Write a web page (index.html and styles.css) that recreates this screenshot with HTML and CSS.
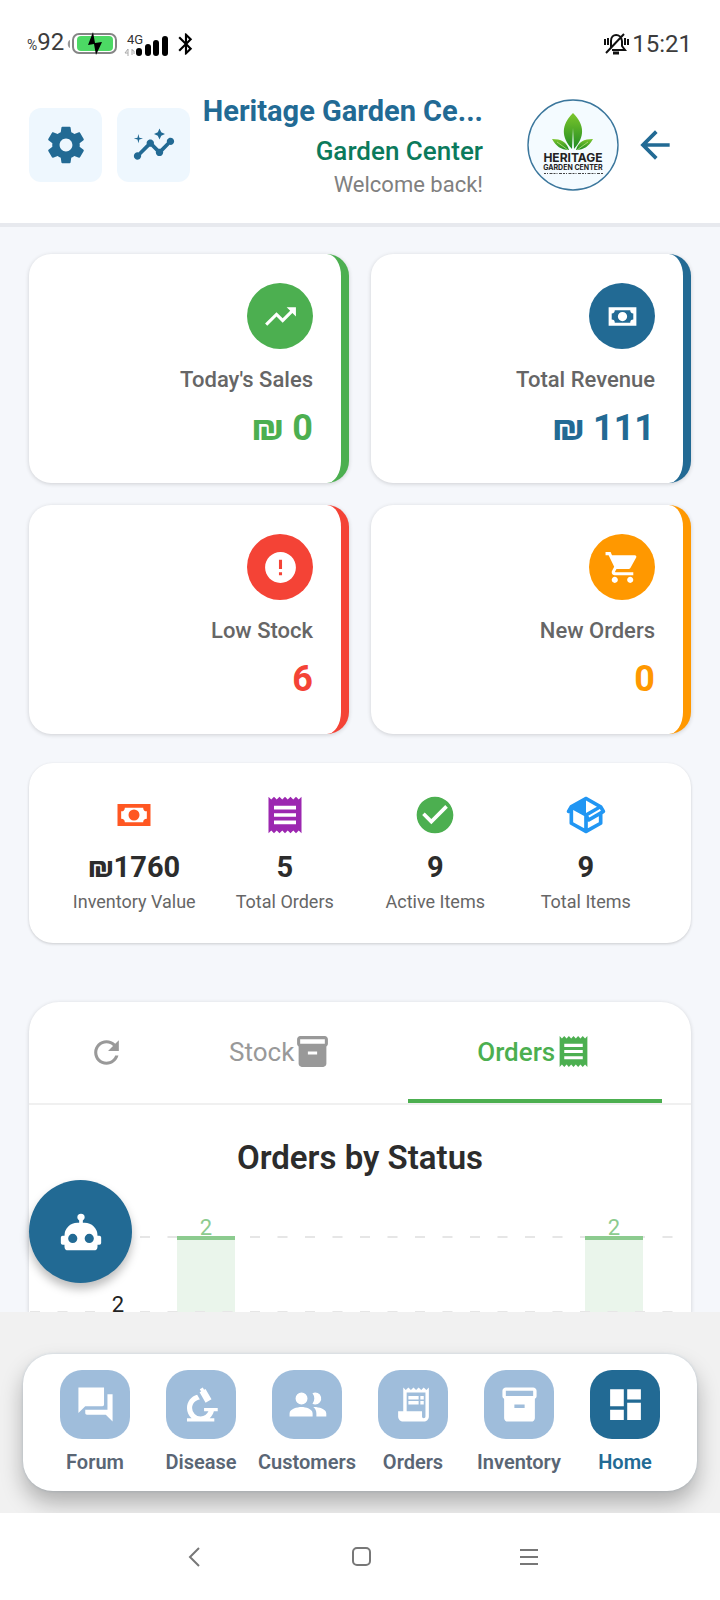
FILE: index.html
```html
<!DOCTYPE html>
<html lang="en">
<head>
<meta charset="utf-8">
<meta name="viewport" content="width=device-width, initial-scale=1">
<title>Heritage Garden Center</title>
<link rel="stylesheet" href="styles.css">
</head>
<body>
<div class="app">
  <div class="status-bar">
    <div class="status-group">
      <span class="battery-level"><span class="percent">%</span>92</span>
      <svg class="battery" width="50" height="24" viewBox="0 0 50 24" aria-hidden="true">
        <path d="M3 8v8c-3-1-3-7 0-8z" fill="#999"/>
        <rect x="6" y="2" width="43" height="19" rx="6" fill="#fff" stroke="#858585" stroke-width="2"/>
        <rect x="10" y="4" width="36" height="15" rx="4" fill="#4cd964"/>
        <path d="M26 0L21 13l6-1 2 11 6-13-7 1z" fill="#000"/>
      </svg>
      <svg class="signal" width="46" height="28" viewBox="0 -4 46 28" aria-hidden="true">
        <text x="3" y="10" class="network">4G</text>
        <path d="M4 22v-7l-3 4h3M8 15v6M8 16l2 1v3" fill="none" stroke="#aaa" stroke-width="1"/>
        <rect x="12" y="14" width="6" height="8" rx="3"/>
        <rect x="21" y="10" width="6" height="12" rx="3"/>
        <rect x="29" y="6" width="6" height="16" rx="3"/>
        <rect x="38" y="2" width="6" height="20" rx="3"/>
      </svg>
      <svg width="26" height="26" viewBox="0 0 24 24" aria-hidden="true"><path d="M17.71 7.71L12 2h-1v7.59L6.41 5 5 6.41 10.59 12 5 17.59 6.41 19 11 14.41V22h1l5.71-5.71-4.3-4.29 4.3-4.29zM13 5.83l1.88 1.88L13 9.59V5.83zm1.88 10.46L13 18.17v-3.76l1.88 1.88z"/></svg>
    </div>
    <div class="status-group">
      <svg width="26" height="24" viewBox="0 0 26 24" fill="none" stroke="#111" stroke-width="2" aria-hidden="true">
        <path d="M8 15V9c0-8 10-8 11 0v5l3 4H9M3 21L21 2M2 7v6M5 6v7M22 6v7M25 7v6"/><path d="M10 21h6" stroke-width="3"/>
      </svg>
      <span class="clock">15:21</span>
    </div>
  </div>

  <header class="header">
    <div class="header-actions">
      <button class="square-button" aria-label="Settings"><svg class="icon-lg" viewBox="0 0 24 24"><path d="M19.43 12.98c.04-.32.07-.64.07-.98s-.03-.66-.07-.98l2.11-1.65c.19-.15.24-.42.12-.64l-2-3.46c-.12-.22-.39-.3-.61-.22l-2.49 1c-.52-.4-1.08-.73-1.69-.98l-.38-2.65C14.46 2.18 14.25 2 14 2h-4c-.25 0-.46.18-.49.42l-.38 2.65c-.61.25-1.17.59-1.69.98l-2.49-1c-.23-.09-.49 0-.61.22l-2 3.46c-.13.22-.07.49.12.64l2.11 1.65c-.04.32-.07.65-.07.98s.03.66.07.98l-2.11 1.65c-.19.15-.24.42-.12.64l2 3.46c.12.22.39.3.61.22l2.49-1c.52.4 1.08.73 1.69.98l.38 2.65c.03.24.24.42.49.42h4c.25 0 .46-.18.49-.42l.38-2.65c.61-.25 1.17-.59 1.69-.98l2.49 1c.23.09.49 0 .61-.22l2-3.46c.12-.22.07-.49-.12-.64l-2.11-1.65zM12 15.5c-1.93 0-3.5-1.57-3.5-3.5s1.57-3.5 3.5-3.5 3.5 1.57 3.5 3.5-1.57 3.5-3.5 3.5z"/></svg></button>
      <button class="square-button" aria-label="Insights"><svg class="icon-lg" viewBox="0 0 24 24"><path d="M21 8c-1.45 0-2.26 1.44-1.93 2.51l-3.55 3.56c-.3-.09-.74-.09-1.04 0l-2.55-2.55C12.27 10.45 11.46 9 10 9c-1.45 0-2.27 1.44-1.93 2.52l-4.56 4.55C2.44 15.74 1 16.55 1 18c0 1.1.9 2 2 2 1.45 0 2.26-1.44 1.93-2.51l4.55-4.56c.3.09.74.09 1.04 0l2.55 2.55C12.73 16.55 13.54 18 15 18c1.45 0 2.27-1.44 1.93-2.52l3.56-3.55C21.56 12.26 23 11.45 23 10c0-1.1-.9-2-2-2z"/><path d="M15 9l.94-2.07L18 6l-2.06-.93L15 3l-.92 2.07L12 6l2.08.93zM3.5 11L4 9l2-.5L4 8l-.5-2L3 8l-2 .5L3 9z"/></svg></button>
    </div>
    <div class="header-text">
      <h1 class="store-name">Heritage Garden Ce...</h1>
      <p class="store-type">Garden Center</p>
      <p class="welcome">Welcome back!</p>
    </div>
    <svg class="logo" viewBox="0 0 92 92" role="img" aria-label="Heritage Garden Center logo">
      <defs><linearGradient id="leaf" x1="0" y1="0" x2="0" y2="1"><stop offset="0" stop-color="#7cc62c"/><stop offset="1" stop-color="#1f8b22"/></linearGradient></defs>
      <circle cx="46" cy="46" r="45" fill="#f4fbff" stroke="#3a769c" stroke-width="1.4"/>
      <path d="M46 14c12 12 12 24 1 36l-1-21-1 21C34 38 34 26 46 14z" fill="url(#leaf)"/>
      <path d="M25 40c9 0 15 3 17 11-8 0-13-4-17-11zM66 40c-9 0-15 3-17 11 8 0 13-4 17-11z" fill="url(#leaf)"/>
      <path d="M30 43l11 8M61 43l-11 8" stroke="#b9e27d" stroke-width=".8"/>
      <text x="46" y="63" class="logo-name">HERITAGE</text>
      <text x="46" y="71" class="logo-sub">GARDEN CENTER</text>
      <path d="M17 74.5h59" stroke="#444" stroke-width="1" stroke-dasharray="2 1 1 1.5 3 1"/>
    </svg>
    <button class="back-button" aria-label="Back"><svg class="icon-lg" viewBox="0 0 24 24"><path d="M20 11H7.83l5.59-5.59L12 4l-8 8 8 8 1.41-1.41L7.83 13H20v-2z"/></svg></button>
  </header>

  <div class="viewport">
    <main class="content">
      <section class="stats">
        <article class="stat green">
          <span class="stat-icon"><svg class="icon-md" viewBox="0 0 24 24"><path d="M16 6l2.29 2.29-4.88 4.88-4-4L2 16.59 3.41 18l6-6 4 4 6.3-6.29L22 12V6z"/></svg></span>
          <span class="stat-label">Today's Sales</span>
          <strong class="stat-value">₪ 0</strong>
        </article>
        <article class="stat blue">
          <span class="stat-icon"><svg class="icon-md" viewBox="0 0 24 24"><path fill-rule="evenodd" d="M3 6H21V18H3V6M12 9A3 3 0 0 1 15 12A3 3 0 0 1 12 15A3 3 0 0 1 9 12A3 3 0 0 1 12 9M7 8A2 2 0 0 1 5 10V14A2 2 0 0 1 7 16H17A2 2 0 0 1 19 14V10A2 2 0 0 1 17 8H7Z"/></svg></span>
          <span class="stat-label">Total Revenue</span>
          <strong class="stat-value">₪ 111</strong>
        </article>
        <article class="stat red">
          <span class="stat-icon"><svg class="icon-md" viewBox="0 0 24 24"><path d="M12 2C6.48 2 2 6.48 2 12s4.48 10 10 10 10-4.48 10-10S17.52 2 12 2zm1 15h-2v-2h2v2zm0-4h-2V7h2v6z"/></svg></span>
          <span class="stat-label">Low Stock</span>
          <strong class="stat-value">6</strong>
        </article>
        <article class="stat orange">
          <span class="stat-icon"><svg class="icon-md" viewBox="0 0 24 24"><path d="M7 18c-1.1 0-1.99.9-1.99 2S5.9 22 7 22s2-.9 2-2-.9-2-2-2zM1 2v2h2l3.6 7.59-1.35 2.45c-.16.28-.25.61-.25.96 0 1.1.9 2 2 2h12v-2H7.42c-.14 0-.25-.11-.25-.25l.03-.12.9-1.63h7.45c.75 0 1.41-.41 1.75-1.03l3.58-6.49A1.003 1.003 0 0 0 20 4H5.21l-.94-2H1zm16 16c-1.1 0-1.99.9-1.99 2s.89 2 1.99 2 2-.9 2-2-.9-2-2-2z"/></svg></span>
          <span class="stat-label">New Orders</span>
          <strong class="stat-value">0</strong>
        </article>
      </section>

      <section class="summary">
        <div class="summary-item">
          <svg class="icon-lg ink-coral" viewBox="0 0 24 24"><path fill-rule="evenodd" d="M3 6H21V18H3V6M12 9A3 3 0 0 1 15 12A3 3 0 0 1 12 15A3 3 0 0 1 9 12A3 3 0 0 1 12 9M7 8A2 2 0 0 1 5 10V14A2 2 0 0 1 7 16H17A2 2 0 0 1 19 14V10A2 2 0 0 1 17 8H7Z"/></svg>
          <strong class="summary-value">₪1760</strong>
          <span class="summary-label">Inventory Value</span>
        </div>
        <div class="summary-item">
          <svg class="icon-lg ink-purple" viewBox="0 0 24 24"><path d="M18 17H6v-2h12v2zm0-4H6v-2h12v2zm0-4H6V7h12v2zM3 22l1.5-1.5L6 22l1.5-1.5L9 22l1.5-1.5L12 22l1.5-1.5L15 22l1.5-1.5L18 22l1.5-1.5L21 22V2l-1.5 1.5L18 2l-1.5 1.5L15 2l-1.5 1.5L12 2l-1.5 1.5L9 2 7.5 3.5 6 2 4.5 3.5 3 2v20z"/></svg>
          <strong class="summary-value">5</strong>
          <span class="summary-label">Total Orders</span>
        </div>
        <div class="summary-item">
          <svg class="icon-lg ink-green" viewBox="0 0 24 24"><path d="M12 2C6.48 2 2 6.48 2 12s4.48 10 10 10 10-4.48 10-10S17.52 2 12 2zm-2 15l-5-5 1.41-1.41L10 14.17l7.59-7.59L19 8l-9 9z"/></svg>
          <strong class="summary-value">9</strong>
          <span class="summary-label">Active Items</span>
        </div>
        <div class="summary-item">
          <svg class="icon-lg ink-sky" viewBox="0 0 24 24"><path d="M2,10.96C1.5,10.68 1.35,10.07 1.63,9.59L3.13,7C3.24,6.8 3.41,6.66 3.6,6.58L11.43,2.18C11.59,2.06 11.79,2 12,2C12.21,2 12.41,2.06 12.57,2.18L20.47,6.62C20.66,6.72 20.82,6.88 20.91,7.08L22.36,9.6C22.64,10.08 22.47,10.69 22,10.96L21,11.54V16.5C21,16.88 20.79,17.21 20.47,17.38L12.57,21.82C12.41,21.94 12.21,22 12,22C11.79,22 11.59,21.94 11.43,21.82L3.53,17.38C3.21,17.21 3,16.88 3,16.5V10.96C2.7,11.13 2.32,11.14 2,10.96M12,4.15V4.15L12,10.85V10.85L17.96,7.5L12,4.15M5,15.91L11,19.29V12.58L5,9.21V15.91M19,15.91V12.69L14,15.59C13.67,15.77 13.3,15.76 13,15.6V19.29L19,15.91M13.85,13.36L20.13,9.73L19.55,8.72L13.27,12.35L13.85,13.36Z"/></svg>
          <strong class="summary-value">9</strong>
          <span class="summary-label">Total Items</span>
        </div>
      </section>

      <section class="chart-card">
        <div class="tabs">
          <button class="refresh" aria-label="Refresh"><svg class="icon-md" viewBox="0 0 24 24"><path d="M17.65 6.35C16.2 4.9 14.21 4 12 4c-4.42 0-7.99 3.58-7.99 8s3.57 8 7.99 8c3.73 0 6.84-2.55 7.73-6h-2.08c-.82 2.33-3.04 4-5.65 4-3.31 0-6-2.69-6-6s2.69-6 6-6c1.66 0 3.14.69 4.22 1.78L13 11h7V4l-2.35 2.35z"/></svg></button>
          <button class="tab">Stock<svg class="icon-md" viewBox="0 0 24 24"><path d="M20 2H4c-1 0-2 .9-2 2v3.01c0 .72.43 1.34 1 1.69V20c0 1.1 1.1 2 2 2h14c.9 0 2-.9 2-2V8.7c.57-.35 1-.97 1-1.69V4c0-1.1-1-2-2-2zm-5 12H9v-2h6v2zm5-7H4V4l16-.02V7z"/></svg></button>
          <button class="tab active">Orders<svg class="icon-md" viewBox="0 0 24 24"><path d="M18 17H6v-2h12v2zm0-4H6v-2h12v2zm0-4H6V7h12v2zM3 22l1.5-1.5L6 22l1.5-1.5L9 22l1.5-1.5L12 22l1.5-1.5L15 22l1.5-1.5L18 22l1.5-1.5L21 22V2l-1.5 1.5L18 2l-1.5 1.5L15 2l-1.5 1.5L12 2l-1.5 1.5L9 2 7.5 3.5 6 2 4.5 3.5 3 2v20z"/></svg></button>
        </div>
        <h2 class="chart-title">Orders by Status</h2>
        <svg class="chart" viewBox="0 0 662 136" role="img" aria-label="Orders by status bar chart">
          <rect class="bar" x="148" y="61" width="58" height="75"/>
          <rect class="bar" x="556" y="61" width="58" height="75"/>
          <path class="grid-line" d="M1 59H644M1 134H644"/>
          <path class="bar-cap" d="M148 60h58M556 60h58"/>
          <text class="bar-value" x="177" y="57">2</text>
          <text class="bar-value" x="585" y="57">2</text>
          <text class="axis-value" x="89" y="134">2</text>
        </svg>
      </section>
    </main>
    <button class="assistant" aria-label="Assistant"><svg class="icon-lg" viewBox="0 0 24 24"><path d="M12,2A2,2 0 0,1 14,4C14,4.74 13.6,5.39 13,5.73V7H14A7,7 0 0,1 21,14H22A1,1 0 0,1 23,15V18A1,1 0 0,1 22,19H21V20A2,2 0 0,1 19,22H5A2,2 0 0,1 3,20V19H2A1,1 0 0,1 1,18V15A1,1 0 0,1 2,14H3A7,7 0 0,1 10,7H11V5.73C10.4,5.39 10,4.74 10,4A2,2 0 0,1 12,2M7.5,13A2.5,2.5 0 0,0 5,15.5A2.5,2.5 0 0,0 7.5,18A2.5,2.5 0 0,0 10,15.5A2.5,2.5 0 0,0 7.5,13M16.5,13A2.5,2.5 0 0,0 14,15.5A2.5,2.5 0 0,0 16.5,18A2.5,2.5 0 0,0 19,15.5A2.5,2.5 0 0,0 16.5,13Z"/></svg></button>
  </div>

  <div class="dock">
    <nav class="bottom-nav">
      <a class="nav-item" href="#forum"><span class="nav-icon"><svg class="icon-nav" viewBox="0 0 24 24"><path d="M22 6h-3v9H6v2c0 .6.4 1 1 1h11l4 4zM17 12V2H2v15l4-4h10c.6 0 1-.4 1-1z"/></svg></span>Forum</a>
      <a class="nav-item" href="#disease"><span class="nav-icon"><svg class="icon-nav" viewBox="0 0 24 24"><path d="M9.46,6.28L11.05,9C8.47,9.26 6.5,11.41 6.5,14A5,5 0 0,0 11.5,19C13.55,19 15.31,17.77 16.08,16H13.5V14H21.5V16H19.25C18.84,17.57 17.97,18.96 16.79,20H19.5V22H3.5V20H6.21C4.55,18.53 3.5,16.39 3.5,14C3.5,10.37 5.96,7.2 9.46,6.28M12.74,2.07L13.5,3.37L14.36,2.87L17.86,8.93L14.39,10.93L10.89,4.87L11.76,4.37L11,3.07L12.74,2.07Z"/></svg></span>Disease</a>
      <a class="nav-item" href="#customers"><span class="nav-icon"><svg class="icon-nav" viewBox="0 0 24 24"><path d="M16.5 12a3.5 3.5 0 1 0-1.6-6.600 5 5 0 0 1 0 6.200c.5.25 1 .4 1.600.4zM8.500 12a3.500 3.500 0 1 0 0-7 3.500 3.500 0 0 0 0 7zM8.500 13.500c-2.500 0-7 1.200-7 3.700V19h13.500v-1.800c0-2.500-4-3.700-6.500-3.700zM16 13.500h-.6c1.100.9 1.800 2.100 1.800 3.700V19H23v-1.800c0-2.500-4.500-3.700-7-3.700z"/></svg></span>Customers</a>
      <a class="nav-item" href="#orders"><span class="nav-icon"><svg class="icon-nav" viewBox="0 0 24 24"><path d="M19.5 3.5L18 2l-1.5 1.5L15 2l-1.5 1.5L12 2l-1.500 1.500L9 2 7.500 3.500 6 2v14H3v3c0 1.660 1.340 3 3 3h12c1.660 0 3-1.340 3-3V2l-1.500 1.500zM19 19c0 .55-.45 1-1 1s-1-.45-1-1v-3H8V5h11v14zM9 7h6v2H9zM16 7h2v2h-2zM9 10h6v2H9zM16 10h2v2h-2z"/></svg></span>Orders</a>
      <a class="nav-item" href="#inventory"><span class="nav-icon"><svg class="icon-nav" viewBox="0 0 24 24"><path d="M20 2H4c-1 0-2 .9-2 2v3.010c0 .72.43 1.340 1 1.690V20c0 1.100 1.100 2 2 2h14c.9 0 2-.9 2-2V8.700c.57-.35 1-.97 1-1.690V4c0-1.100-1-2-2-2zm-5 12H9v-2h6v2zm5-7H4V4l16-.02V7z"/></svg></span>Inventory</a>
      <a class="nav-item current" href="#home" aria-current="page"><span class="nav-icon"><svg class="icon-nav" viewBox="0 0 24 24"><path d="M3 13h8V3H3v10zm0 8h8v-6H3v6zm10 0h8V11h-8v10zm0-18v6h8V3h-8z"/></svg></span>Home</a>
    </nav>
  </div>

  <div class="system-nav">
    <button class="system-button" aria-label="System back"><svg width="24" height="24" viewBox="0 0 24 24"><path d="M16 3l-9 9 9 9"/></svg></button>
    <button class="system-button" aria-label="System home"><svg width="24" height="24" viewBox="0 0 24 24"><rect x="3" y="3" width="17" height="17" rx="4"/></svg></button>
    <button class="system-button" aria-label="Recent apps"><svg width="24" height="24" viewBox="0 0 24 24"><path d="M3 5h18M3 12h18M3 19h18"/></svg></button>
  </div>
</div>
</body>
</html>
```
FILE: styles.css
```css
* { box-sizing: border-box; }

body {
  margin: 0;
  background: #fff;
  font-family: Roboto, "Liberation Sans", sans-serif;
}

h1, h2, p { margin: 0; }

button {
  padding: 0;
  border: 0;
  background: none;
  font: inherit;
  color: inherit;
}

svg { display: block; flex: none; }

.icon-lg { width: 44px; height: 44px; fill: currentColor; }
.icon-md { width: 37px; height: 37px; fill: currentColor; }
.icon-nav { width: 41px; height: 41px; fill: currentColor; }

.app {
  display: flex;
  flex-direction: column;
  height: 100vh;
}

.status-bar {
  display: flex;
  justify-content: space-between;
  align-items: center;
  height: 85px;
  padding: 2px 28px 0 27px;
}

.status-group { display: flex; align-items: center; gap: 3px; }
.battery-level, .clock { font-size: 24px; line-height: 30px; color: #3c3c3c; }
.percent { font-size: 14px; }
.signal { margin-left: 4px; }
.network { font-size: 13px; fill: #333; }

.header {
  display: flex;
  align-items: center;
  padding: 8px 43px 26px 29px;
  border-bottom: 4px solid #e7e9ee;
  color: #226a94;
}

.header-actions { display: flex; gap: 15px; }

.square-button {
  display: grid;
  place-items: center;
  width: 73px;
  height: 74px;
  border-radius: 12px;
  background: #eef7fe;
}

.header-text {
  flex: 1;
  min-width: 0;
  display: grid;
  gap: 4px;
  margin: 0 44px 0 8px;
  text-align: right;
}

.store-name {
  font-size: 29px;
  line-height: 36px;
  font-weight: 700;
  white-space: nowrap;
}

.store-type { font-size: 26px; line-height: 36px; font-weight: 500; color: #0b7a5c; }
.welcome { font-size: 22px; line-height: 24px; color: #808080; }

.logo { width: 92px; height: 92px; }
.logo-name { font: 700 12px Inter, sans-serif; text-anchor: middle; fill: #222; }
.logo-sub { font: 700 7px Inter, sans-serif; text-anchor: middle; fill: #222; }
.back-button { margin-left: 14px; }

.viewport {
  position: relative;
  flex: 1;
  min-height: 0;
  background: #f5f7fb;
}

.content {
  height: 100%;
  padding: 27px 29px 0;
  overflow-y: auto;
  scrollbar-width: none;
}

.stats {
  display: grid;
  grid-template-columns: 1fr 1fr;
  gap: 22px;
}

.stat {
  display: flex;
  flex-direction: column;
  align-items: flex-end;
  padding: 29px 28px;
  border-right: 8px solid var(--accent);
  border-radius: 22px;
  background: #fff;
  box-shadow: 0 1px 4px rgba(0, 0, 0, .16);
}

.green { --accent: #4caf50; }
.blue { --accent: #226a94; }
.red { --accent: #f44336; }
.orange { --accent: #ff9800; }

.stat-icon {
  display: grid;
  place-items: center;
  width: 66px;
  height: 66px;
  margin-bottom: 17px;
  border-radius: 50%;
  background: var(--accent);
  color: #fff;
}

.stat-label { font-size: 22px; line-height: 27px; font-weight: 500; color: #666; }

.stat-value {
  margin-top: 9px;
  font-size: 36px;
  line-height: 52px;
  font-weight: 700;
  color: var(--accent);
}

.summary {
  display: grid;
  grid-template-columns: repeat(4, 1fr);
  margin-top: 29px;
  padding: 30px;
  border-radius: 24px;
  background: #fff;
  box-shadow: 0 1px 3px rgba(0, 0, 0, .18);
}

.summary-item { display: flex; flex-direction: column; align-items: center; white-space: nowrap; }

.summary-value {
  margin: 10px 0 4px;
  font-size: 29px;
  line-height: 40px;
  font-weight: 700;
  color: #2c2c2c;
}

.summary-label { font-size: 18px; line-height: 22px; color: #666; }

.ink-coral { color: #ff5722; }
.ink-purple { color: #9c27b0; }
.ink-green { color: #4caf50; }
.ink-sky { color: #2196f3; }

.chart-card {
  margin-top: 59px;
  border-radius: 30px 30px 0 0;
  background: #fff;
  box-shadow: 0 1px 4px rgba(0, 0, 0, .16);
}

.tabs {
  display: flex;
  height: 103px;
  padding: 0 29px 0 30px;
  border-bottom: 2px solid #f0f0f0;
  color: #999;
}

.refresh { display: grid; place-items: center; flex: 0 0 94px; }

.tab {
  display: flex;
  flex: 1;
  align-items: center;
  justify-content: center;
  padding-top: 2px;
  border-bottom: 4px solid transparent;
  font-size: 26px;
}

.tab.active { border-color: #4caf50; color: #4caf50; font-weight: 500; }

.chart-title {
  padding-top: 33px;
  font-size: 33px;
  line-height: 40px;
  font-weight: 600;
  color: #2c2c2c;
  text-align: center;
}

.chart { width: 100%; }
.bar { fill: #eaf5eb; }
.bar-cap { stroke: #8ccb8f; stroke-width: 4; }
.grid-line { stroke: #e6e6e6; stroke-width: 2; stroke-dasharray: 10 17.5; }
.bar-value { font-size: 22px; text-anchor: middle; fill: #8ccb8f; }
.axis-value { font-size: 22px; text-anchor: middle; fill: #222; }

.assistant {
  position: absolute;
  left: 29px;
  bottom: 29px;
  display: grid;
  place-items: center;
  width: 103px;
  height: 103px;
  border-radius: 50%;
  background: #226a94;
  color: #fff;
  box-shadow: 0 6px 10px rgba(0, 0, 0, .26);
}

.dock {
  padding: 42px 23px 22px;
  overflow: hidden;
  background: #f1f1f1;
}

.bottom-nav {
  display: grid;
  grid-template-columns: repeat(6, 1fr);
  padding: 16px 19px 17px;
  border-radius: 30px;
  background: #fff;
  box-shadow: 0 12px 22px rgba(0, 0, 0, .28), 0 0 3px rgba(150, 180, 205, .4);
}

.nav-item {
  display: flex;
  flex-direction: column;
  align-items: center;
  gap: 11px;
  font-size: 20px;
  line-height: 24px;
  font-weight: 600;
  color: #5a6675;
  text-decoration: none;
}

.nav-icon {
  display: grid;
  place-items: center;
  width: 70px;
  height: 69px;
  border-radius: 22px;
  background: #9fbddb;
  color: #fff;
}

.current { color: #226a94; }
.current .nav-icon { background: #226a94; }

.system-nav {
  display: flex;
  justify-content: center;
  align-items: center;
  gap: 107px;
  height: 87px;
  padding-left: 3px;
  background: #fff;
}

.system-button { display: grid; place-items: center; width: 60px; height: 60px; }
.system-button svg { fill: none; stroke: #777; stroke-width: 2; }
```
